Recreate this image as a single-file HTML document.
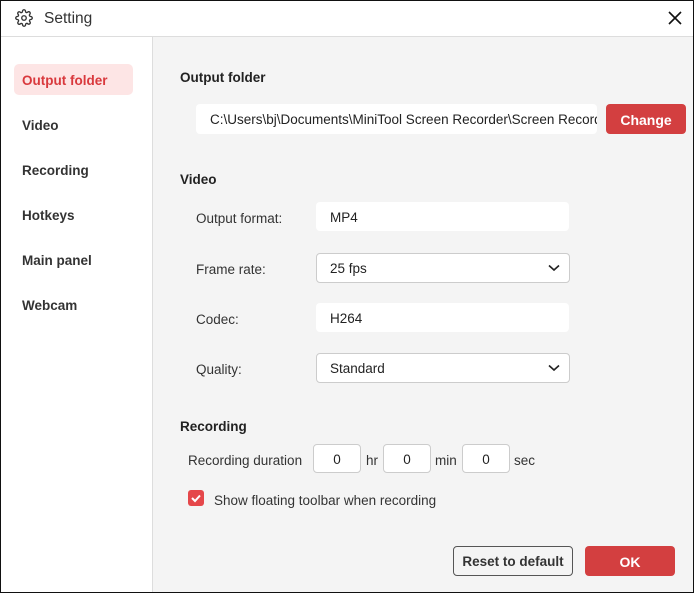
<!DOCTYPE html>
<html><head><meta charset="utf-8"><style>
*{margin:0;padding:0;box-sizing:border-box}
body{width:694px;height:593px;overflow:hidden;font-family:"Liberation Sans",sans-serif;color:#222;background:#fff}
.win{position:absolute;left:0;top:0;width:694px;height:593px;background:#f4f4f4}
.frame{position:absolute;left:0;top:0;width:694px;height:593px;border:1px solid #111}
.t{position:absolute;white-space:nowrap;margin-top:1px}
.title{position:absolute;left:0;top:0;width:694px;height:37px;background:#fff;border-bottom:1px solid #ddd}
.side{position:absolute;left:0;top:37px;width:153px;height:556px;background:#fff;border-right:1px solid #ddd}
.nav{position:absolute;left:22px;font-size:13.5px;font-weight:bold;color:#333;margin-top:1px}
.box{position:absolute;background:#fff;border-radius:4px;font-size:13.5px;padding-left:14px;line-height:31px}
.sel{border:1px solid #ccc}
.h{position:absolute;left:180px;font-size:13.5px;font-weight:bold;margin-top:1px}
.lbl{position:absolute;font-size:13.5px;color:#333;margin-top:1px}
.sm{position:absolute;background:#fff;border:1px solid #ccc;border-radius:4px;width:48px;height:29px;font-size:13.5px;line-height:29px;text-align:center}
</style></head><body>
<div class="win">
<div class="title">
<svg style="position:absolute;left:15px;top:9px" width="18" height="18" viewBox="0 0 24 24" fill="none" stroke="#333" stroke-width="1.8"><circle cx="12" cy="12" r="3"/><path d="M19.4 15a1.65 1.65 0 0 0 .33 1.820l.06.06a2 2 0 1 1-2.830 2.830l-.06-.06a1.65 1.65 0 0 0-1.820-.33 1.65 1.65 0 0 0-1 1.510V21a2 2 0 1 1-4 0v-.09A1.65 1.65 0 0 0 9 19.4a1.65 1.65 0 0 0-1.820.33l-.06.06a2 2 0 1 1-2.830-2.830l.06-.06A1.65 1.650 0 0 0 4.680 15a1.650 1.650 0 0 0-1.510-1H3a2 2 0 1 1 0-4h.09A1.650 1.650 0 0 0 4.600 9a1.650 1.650 0 0 0-.33-1.820l-.06-.06a2 2 0 1 1 2.830-2.830l.06.06A1.650 1.650 0 0 0 9 4.680a1.650 1.650 0 0 0 1-1.510V3a2 2 0 1 1 4 0v.09a1.650 1.650 0 0 0 1 1.510 1.650 1.650 0 0 0 1.820-.33l.06-.06a2 2 0 1 1 2.830 2.830l-.06.06A1.650 1.650 0 0 0 19.4 9a1.650 1.650 0 0 0 1.510 1H21a2 2 0 1 1 0 4h-.09a1.650 1.650 0 0 0-1.510 1z"/></svg>
<div class="t" style="left:44px;top:9px;font-size:15.5px;color:#333">Setting</div>
<svg style="position:absolute;left:668px;top:11px" width="14" height="14" viewBox="0 0 14 14" stroke="#111" stroke-width="1.6"><path d="M1 1L13 13M13 1L1 13"/></svg>
</div>
<div class="side">
<div style="position:absolute;left:14px;top:27px;width:119px;height:31px;background:#fde5e5;border-radius:5px"></div>
<div class="nav" style="top:35px;color:#d9393d">Output folder</div>
<div class="nav" style="top:80px">Video</div>
<div class="nav" style="top:125px">Recording</div>
<div class="nav" style="top:170px">Hotkeys</div>
<div class="nav" style="top:215px">Main panel</div>
<div class="nav" style="top:260px">Webcam</div>
</div>
<div class="h" style="top:69px">Output folder</div>
<div class="box" style="left:196px;top:104px;width:401px;height:30px;overflow:hidden;white-space:nowrap">C:\Users\bj\Documents\MiniTool Screen Recorder\Screen Recorder</div>
<div style="position:absolute;left:606px;top:104px;width:80px;height:30px;background:#d33f40;border-radius:4px;color:#fff;font-weight:bold;font-size:14px;text-align:center;line-height:32px">Change</div>
<div class="h" style="top:171px">Video</div>
<div class="lbl" style="left:196px;top:210px">Output format:</div>
<div class="box" style="left:316px;top:202px;width:253px;height:29px">MP4</div>
<div class="lbl" style="left:196px;top:261px">Frame rate:</div>
<div class="box sel" style="left:316px;top:253px;width:254px;height:30px;padding-left:13px;line-height:30px">25 fps</div>
<div class="lbl" style="left:196px;top:311px">Codec:</div>
<div class="box" style="left:316px;top:303px;width:253px;height:29px">H264</div>
<div class="lbl" style="left:196px;top:361px">Quality:</div>
<div class="box sel" style="left:316px;top:353px;width:254px;height:30px;padding-left:13px;line-height:30px">Standard</div>
<svg style="position:absolute;left:548px;top:264px" width="12" height="8" viewBox="0 0 12 8" fill="none" stroke="#222" stroke-width="1.6"><path d="M1 1.5L6 6L11 1.5"/></svg>
<svg style="position:absolute;left:548px;top:364px" width="12" height="8" viewBox="0 0 12 8" fill="none" stroke="#222" stroke-width="1.6"><path d="M1 1.5L6 6L11 1.5"/></svg>
<div class="h" style="top:418px">Recording</div>
<div class="lbl" style="left:188px;top:452px">Recording duration</div>
<div class="sm" style="left:313px;top:444px">0</div>
<div class="lbl" style="left:366px;top:452px">hr</div>
<div class="sm" style="left:383px;top:444px">0</div>
<div class="lbl" style="left:435px;top:452px">min</div>
<div class="sm" style="left:462px;top:444px">0</div>
<div class="lbl" style="left:514px;top:452px">sec</div>
<div style="position:absolute;left:188px;top:490px;width:16px;height:16px;background:#e5474a;border-radius:3px"></div>
<svg style="position:absolute;left:188px;top:490px" width="16" height="16" viewBox="0 0 16 16" fill="none" stroke="#fff" stroke-width="2"><path d="M4 8l3 3l5-5.5"/></svg>
<div class="lbl" style="left:214px;top:492px">Show floating toolbar when recording</div>
<div style="position:absolute;left:453px;top:546px;width:120px;height:30px;border:1px solid #555;border-radius:4px;background:#f4f4f4;text-align:center;line-height:30px;font-size:13.5px;font-weight:bold;color:#333">Reset to default</div>
<div style="position:absolute;left:585px;top:546px;width:90px;height:30px;background:#d33f40;border-radius:4px;text-align:center;line-height:32px;font-size:14px;font-weight:bold;color:#fff">OK</div>
</div>
<div class="frame"></div>
</body></html>
